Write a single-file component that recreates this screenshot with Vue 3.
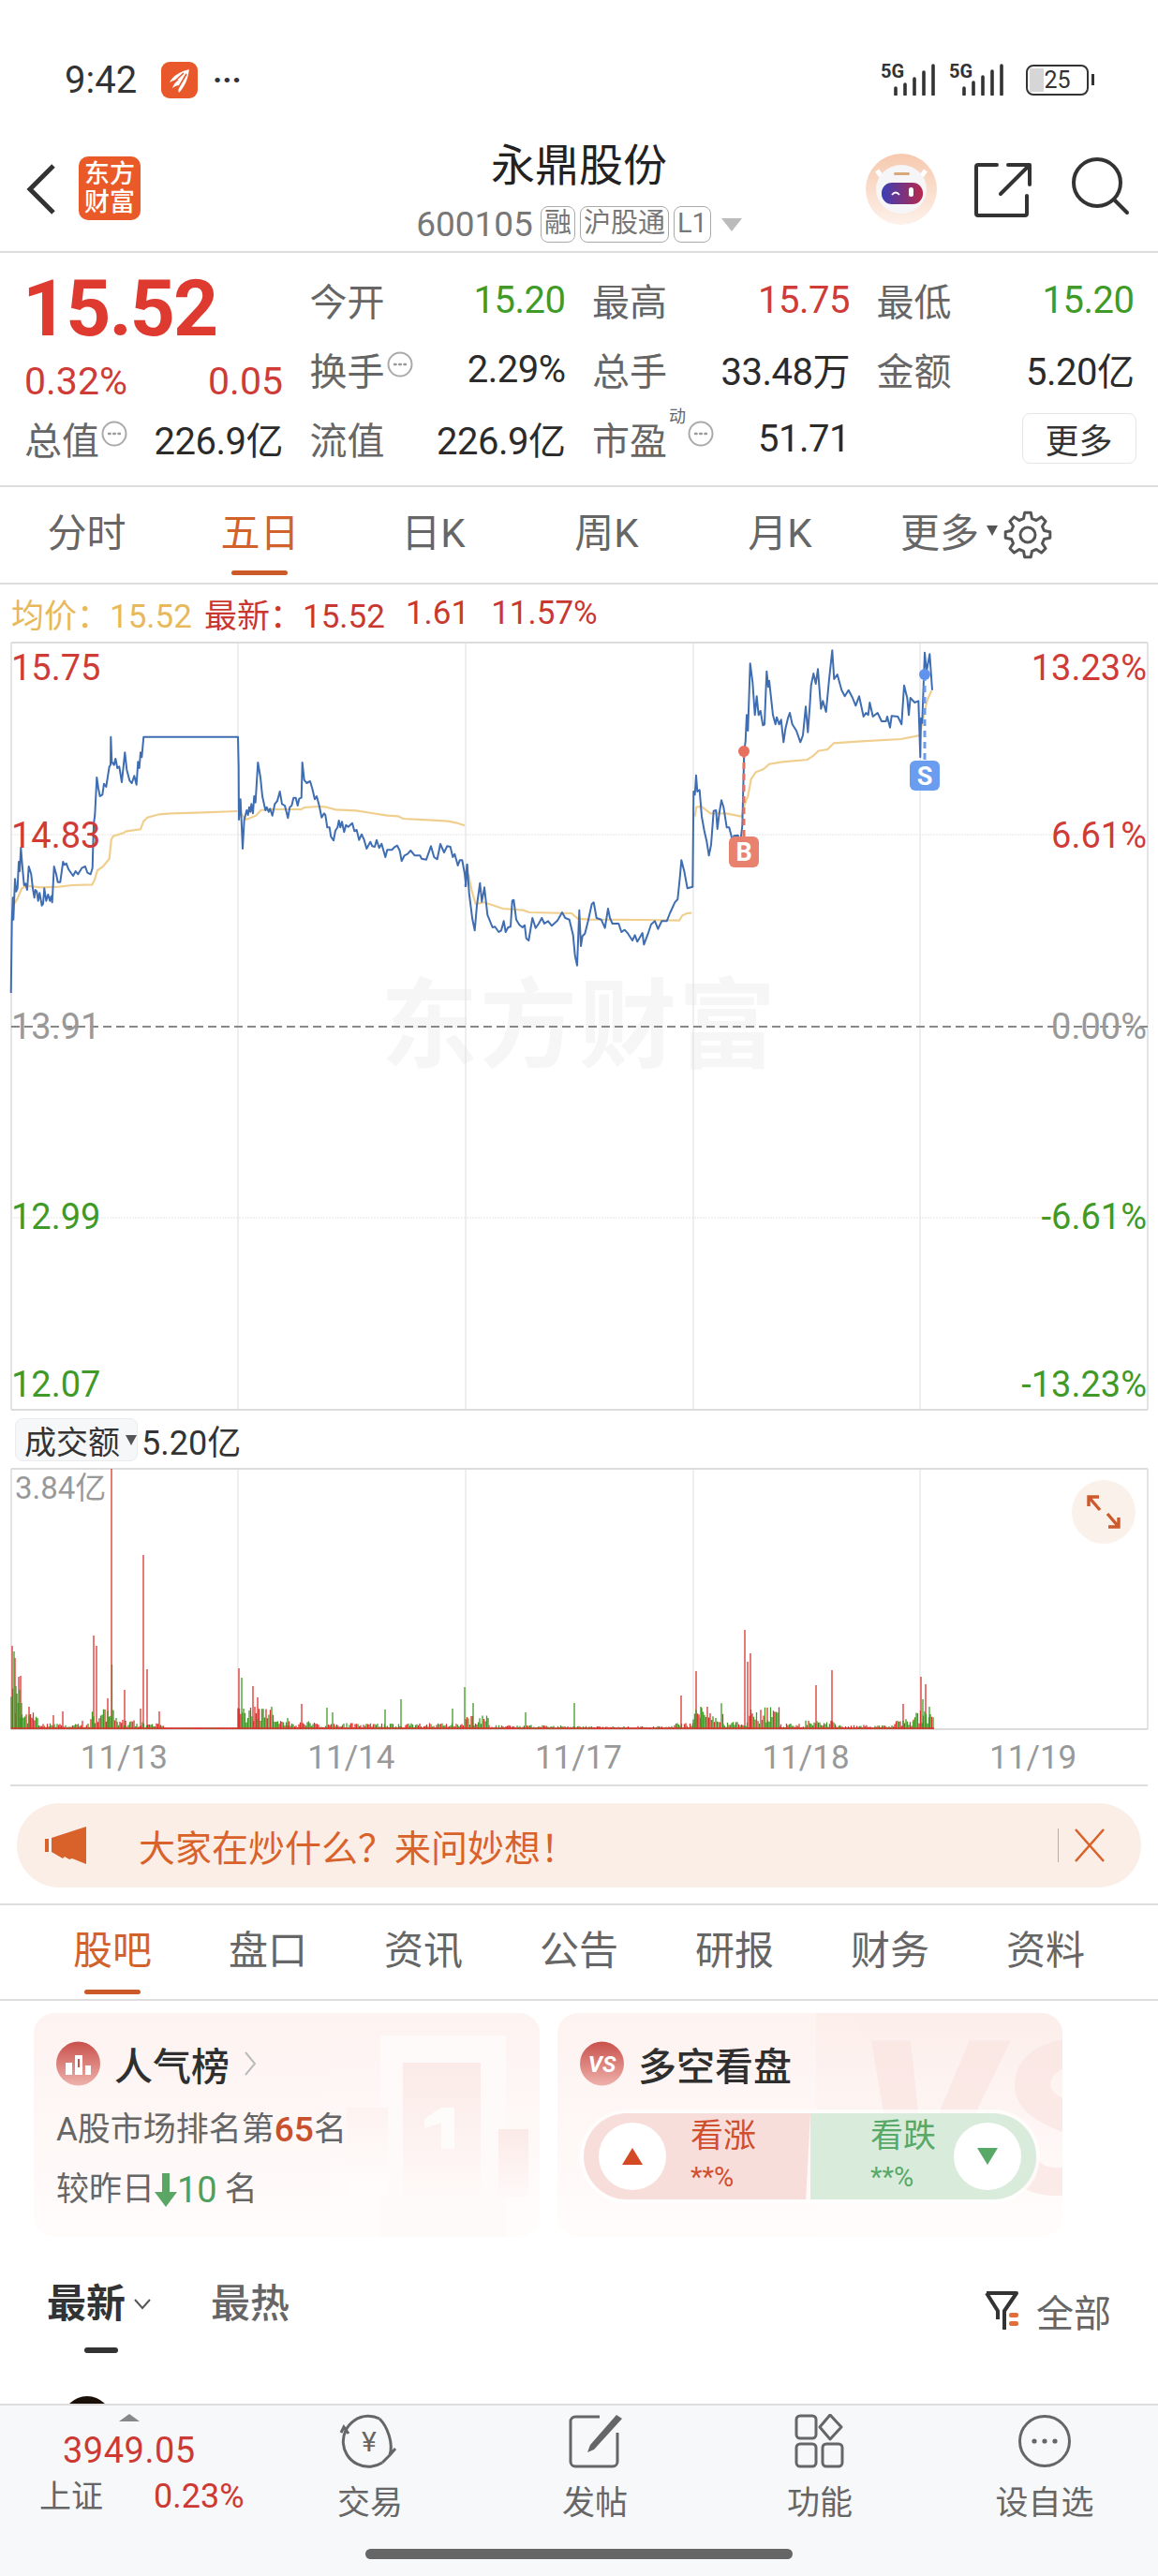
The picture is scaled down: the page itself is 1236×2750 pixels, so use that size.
<template>
  <div class="page">
    <!-- status bar -->
    <div class="status">
      <span class="time">9:42</span>
      <svg class="app-dot" width="39" height="39" viewBox="0 0 39 39">
        <rect width="39" height="39" rx="9" fill="#e9582a" />
        <path d="M30 8C21 10 12 15 9 22c3-2 7-3 10-3-3 2-6 5-7 9 3-2 5-3 7-3-1 3-1 5 0 8 5-5 10-14 11-26z" fill="#fff" />
        <path d="M27 13 17 30M24 12 12 23" stroke="#e9582a" stroke-width="1.6" fill="none" />
      </svg>
      <span class="more-dots">···</span>
      <div class="status-right">
        <div class="sig">
          <span class="five-g">5G</span>
          <svg width="65" height="34" viewBox="0 0 65 34"><path v-for="(b, i) in bars1" :key="i" :d="`M${b[0]} 33V${b[1]}`" stroke="#333" stroke-width="3.6" stroke-linecap="round" /></svg>
        </div>
        <div class="sig">
          <span class="five-g">5G</span>
          <svg width="65" height="34" viewBox="0 0 65 34"><path v-for="(b, i) in bars2" :key="i" :d="`M${b[0]} 33V${b[1]}`" stroke="#333" stroke-width="3.6" stroke-linecap="round" /></svg>
        </div>
        <div class="battery"><span class="batt-fill"></span><span class="batt-num">25</span></div>
        <span class="batt-nub"></span>
      </div>
    </div>

    <!-- stock header -->
    <div class="nav">
      <svg class="back" width="32" height="54" viewBox="0 0 32 54"><path d="M29 2 4 27l25 25" fill="none" stroke="#333" stroke-width="5" /></svg>
      <div class="logo"><span>东方</span><span>财富</span></div>
      <div class="nav-mid">
        <div class="stock-name">永鼎股份</div>
        <div class="stock-code">
          <span class="code-num">600105</span>
          <span class="tag">融</span>
          <span class="tag">沪股通</span>
          <span class="tag">L1</span>
          <span class="tri-down"></span>
        </div>
      </div>
      <svg class="bot" width="76" height="76" viewBox="0 0 76 76">
        <defs>
          <linearGradient id="botbg" x1="0" y1="0" x2="0" y2="1"><stop offset="0" stop-color="#f6c9ae" /><stop offset="1" stop-color="#fdf1ea" /></linearGradient>
          <linearGradient id="visor" x1="0" y1="0" x2="1" y2="0"><stop offset="0" stop-color="#3a3fb8" /><stop offset="1" stop-color="#b8284a" /></linearGradient>
        </defs>
        <circle cx="38" cy="38" r="38" fill="url(#botbg)" />
        <path d="M12 18l6 8M64 18l-6 8" stroke="#fff" stroke-width="5" />
        <ellipse cx="38" cy="38" rx="27" ry="26" fill="#f6f6f8" />
        <rect x="30" y="20" width="17" height="3" rx="1.5" fill="#d8a878" />
        <rect x="17" y="31" width="44" height="23" rx="11" fill="url(#visor)" />
        <path d="M28 44q4-5 8 0" stroke="#fff" stroke-width="1.8" fill="none" />
        <rect x="46" y="36" width="5" height="10" rx="2.5" fill="#fff" />
      </svg>
      <svg class="share" width="62" height="60" viewBox="0 0 62 60">
        <path d="M24 4H4a2 2 0 0 0-2 2v50a2 2 0 0 0 2 2h50a2 2 0 0 0 2-2V37M36 4h23v21M58 5 28 35" fill="none" stroke="#333" stroke-width="4" stroke-linecap="round" stroke-linejoin="round" />
      </svg>
      <svg class="search" width="62" height="62" viewBox="0 0 62 62">
        <circle cx="27" cy="27" r="25" fill="none" stroke="#333" stroke-width="4" />
        <path d="M45 45 59 59" stroke="#333" stroke-width="4" stroke-linecap="round" />
      </svg>
    </div>

    <!-- quote -->
    <div class="quote">
      <div class="price-block">
        <div class="price">15.52</div>
        <div class="change"><span>0.32%</span><span>0.05</span></div>
      </div>
      <div v-for="c in quoteCells" :key="c.label" class="cell">
        <span class="cell-label">{{ c.label }}<sup v-if="c.sup" class="sup">{{ c.sup }}</sup>
          <svg v-if="c.info" class="info" width="28" height="28" viewBox="0 0 28 28"><circle cx="14" cy="14" r="12.5" fill="none" stroke="#aaa" stroke-width="2" /><path d="M8 14h1.6M13.2 14h1.6M18.4 14h1.6" stroke="#999" stroke-width="2.4" stroke-linecap="round" /></svg>
        </span>
        <span class="cell-val" :class="c.color">{{ c.value }}</span>
      </div>
      <div class="cell cell-first">
        <span class="cell-label">总值<svg class="info" width="28" height="28" viewBox="0 0 28 28"><circle cx="14" cy="14" r="12.5" fill="none" stroke="#aaa" stroke-width="2" /><path d="M8 14h1.6M13.2 14h1.6M18.4 14h1.6" stroke="#999" stroke-width="2.4" stroke-linecap="round" /></svg></span>
        <span class="cell-val">226.9亿</span>
      </div>
      <div v-for="c in quoteCells2" :key="c.label" class="cell">
        <span class="cell-label">{{ c.label }}<sup v-if="c.sup" class="sup">{{ c.sup }}</sup>
          <svg v-if="c.info" class="info" width="28" height="28" viewBox="0 0 28 28"><circle cx="14" cy="14" r="12.5" fill="none" stroke="#aaa" stroke-width="2" /><path d="M8 14h1.6M13.2 14h1.6M18.4 14h1.6" stroke="#999" stroke-width="2.4" stroke-linecap="round" /></svg>
        </span>
        <span class="cell-val">{{ c.value }}</span>
      </div>
      <div class="cell cell-end"><button class="more-btn">更多</button></div>
    </div>

    <!-- period tabs -->
    <div class="period-tabs">
      <div v-for="t in periods" :key="t" class="period" :class="{ active: t === '五日' }">{{ t }}</div>
      <div class="period period-more">更多<span class="mini-tri"></span></div>
      <svg class="gear" width="52" height="52" viewBox="0 0 52 52">
        <path :d="gearPath" fill="none" stroke="#555" stroke-width="3" stroke-linejoin="round" />
        <circle cx="26" cy="26" r="8" fill="none" stroke="#555" stroke-width="3" />
      </svg>
    </div>

    <div class="legend">
      <span class="avg">均价：15.52</span>
      <span class="latest">最新：15.52</span>
      <span class="latest gap1">1.61</span>
      <span class="latest gap2">11.57%</span>
    </div>

    <!-- price chart -->
    <svg class="chart" width="1236" height="822" viewBox="0 685 1236 822">
      <text x="618" y="1132" class="watermark" text-anchor="middle">东方财富</text>
      <path d="M12 686H1225M12 1505H1225" stroke="#dcdcdc" stroke-width="2" />
      <path d="M12 686V1505M1225 686V1505" stroke="#dcdcdc" stroke-width="1.5" />
      <path d="M254 686V1505M497 686V1505M740 686V1505M982 686V1505" stroke="#dedede" stroke-width="1" />
      <path d="M12 891H1225M12 1300H1225" stroke="#e4e4e4" stroke-width="1" stroke-dasharray="2 1" />
      <path d="M12 1096H1225" stroke="#888" stroke-width="2" stroke-dasharray="9 5" />
      <polyline v-for="(a, i) in avgLines" :key="i" :points="a" fill="none" stroke="#f0cf8e" stroke-width="2.2" />
      <polyline :points="priceLine" fill="none" stroke="#3f6db2" stroke-width="2" stroke-linejoin="round" />
      <path d="M794 802V893" stroke="#e8705f" stroke-width="3" stroke-dasharray="7 5" />
      <circle cx="794" cy="802" r="6" fill="#e8705f" />
      <rect x="778" y="893" width="32" height="33" rx="6" fill="#e8826f" />
      <text x="794" y="919" class="badge" text-anchor="middle">B</text>
      <path d="M987 720V812" stroke="#6a9cf0" stroke-width="3" stroke-dasharray="7 5" />
      <circle cx="987" cy="720" r="6" fill="#5f93ee" />
      <rect x="971" y="812" width="32" height="32" rx="6" fill="#6a9cf0" />
      <text x="987" y="838" class="badge" text-anchor="middle">S</text>
      <text v-for="l in axisLeft" :key="l.t" x="12" :y="l.y" class="axis" :class="l.c">{{ l.t }}</text>
      <text v-for="l in axisRight" :key="l.t" x="1224" :y="l.y" class="axis" text-anchor="end" :class="l.c">{{ l.t }}</text>
    </svg>

    <!-- volume -->
    <div class="vol-head">
      <div class="vol-select">成交额<span class="mini-tri dark"></span></div>
      <span class="vol-val">5.20亿</span>
    </div>
    <div class="vol-wrap">
      <svg width="1236" height="280" viewBox="0 1567 1236 280">
        <path d="M12 1568H1225M12 1846H1225" stroke="#dcdcdc" stroke-width="2" />
        <path d="M12 1568V1846M1225 1568V1846" stroke="#dcdcdc" stroke-width="1.5" />
        <path d="M254 1568V1846M497 1568V1846M740 1568V1846M982 1568V1846" stroke="#dedede" stroke-width="1" />
        <path :d="volRed" stroke="#d8332e" stroke-width="1.3" fill="none" />
        <path :d="volGreen" stroke="#3f9a25" stroke-width="1.3" fill="none" />
        <path d="M12 1845H997" stroke="#d8332e" stroke-width="1.6" />
        <text x="16" y="1600" class="vol-max">3.84亿</text>
      </svg>
      <div class="expand">
        <svg width="36" height="36" viewBox="0 0 36 36">
          <path d="M2 12V2h11M2 2l12 14M34 24v10H23M34 34 22 20" fill="none" stroke="#cd5a2c" stroke-width="3.4" />
        </svg>
      </div>
    </div>
    <div class="dates"><span v-for="d in dates" :key="d">{{ d }}</span></div>

    <!-- ask banner -->
    <div class="banner">
      <svg class="horn" width="46" height="40" viewBox="0 0 46 40">
        <path d="M0 13h4v14H0zM7 12 44 0v40l-15-6-3 1-5-3-2 2-12-7z" fill="#d9622b" />
      </svg>
      <span class="banner-text">大家在炒什么？来问妙想！</span>
      <span class="banner-sep"></span>
      <svg width="34" height="38" viewBox="0 0 34 38"><path d="M2 2 32 36M32 2 2 36" stroke="#d9622b" stroke-width="2.6" /></svg>
    </div>

    <!-- community tabs -->
    <div class="bar-tabs">
      <div v-for="t in barTabs" :key="t" class="bar-tab" :class="{ active: t === '股吧' }">{{ t }}</div>
    </div>

    <!-- cards -->
    <div class="cards">
      <div class="card">
        <svg class="card-bg" width="540" height="239" viewBox="0 0 540 239">
          <defs>
            <linearGradient id="podA" x1="0" y1="0" x2="0" y2="1"><stop offset="0" stop-color="#fbeae7" /><stop offset="1" stop-color="#fef9f8" /></linearGradient>
            <linearGradient id="podB" x1="0" y1="0" x2="0" y2="1"><stop offset="0" stop-color="#fdf3f1" /><stop offset="1" stop-color="#fffdfc" /></linearGradient>
          </defs>
          <rect x="315" y="0" width="225" height="239" fill="url(#podB)" />
          <rect x="370" y="24" width="134" height="215" fill="#fefafa" />
          <rect x="334" y="101" width="44" height="95" fill="url(#podB)" />
          <rect x="394" y="53" width="83" height="143" fill="url(#podA)" />
          <rect x="496" y="124" width="32" height="72" fill="url(#podA)" />
          <path d="M417 113l18-12h14v44h-14v-28l-18 6z" fill="#fefcfb" />
        </svg>
        <div class="card-body">
          <div class="card-title">
            <svg width="47" height="48" viewBox="0 0 47 48">
              <defs><linearGradient id="ic1" x1="0" y1="0" x2="0" y2="1"><stop offset="0" stop-color="#c9504c" /><stop offset="1" stop-color="#eeb2ab" /></linearGradient></defs>
              <circle cx="23.5" cy="24" r="23.5" fill="url(#ic1)" />
              <path d="M10 23h7v13h-7zM20 15h8v21h-8zM31 26h6v10h-6z" fill="#fff" />
              <path d="M24 19v9" stroke="#c9504c" stroke-width="2" />
            </svg>
            <span>人气榜</span>
            <svg width="14" height="28" viewBox="0 0 14 28"><path d="M2 2 12 14 2 26" fill="none" stroke="#bbb" stroke-width="2" /></svg>
          </div>
          <div class="card-line">A股市场排名第<b class="rank">65</b>名</div>
          <div class="card-line second">较昨日<svg width="24" height="36" viewBox="0 0 24 36"><path d="M8 0h8v20h8L12 36 0 20h8z" fill="#5aa765" /></svg><span class="drop">10</span><span class="ming">名</span></div>
        </div>
      </div>
      <div class="card card-vs">
        <span class="ghost-band"></span>
        <span class="ghost-vs">VS</span>
        <div class="card-body">
          <div class="card-title">
            <svg width="47" height="48" viewBox="0 0 47 48">
              <circle cx="23.5" cy="24" r="23.5" fill="url(#ic1)" />
              <text x="23.5" y="33" class="vs-mark" text-anchor="middle">VS</text>
            </svg>
            <span>多空看盘</span>
          </div>
          <div class="pill">
            <div class="pill-side up">
              <span class="pill-circle"><span class="tri up-tri"></span></span>
              <div class="pill-text"><span>看涨</span><small>**%</small></div>
            </div>
            <div class="pill-side down">
              <div class="pill-text"><span>看跌</span><small>**%</small></div>
              <span class="pill-circle"><span class="tri down-tri"></span></span>
            </div>
          </div>
        </div>
      </div>
    </div>

    <!-- feed tabs -->
    <div class="feed-tabs">
      <div class="feed-tab on">最新<svg width="20" height="12" viewBox="0 0 20 12"><path d="M2 1l8 9 8-9" fill="none" stroke="#555" stroke-width="2" /></svg></div>
      <div class="feed-tab">最热</div>
      <div class="feed-filter">
        <svg width="38" height="44" viewBox="0 0 38 44">
          <path d="M3 3h32L22 22v20M3 3l12 19v9" fill="none" stroke="#333" stroke-width="4" stroke-linejoin="round" />
          <rect x="27" y="24" width="10" height="5" rx="2" fill="#e0703a" />
          <rect x="27" y="33" width="10" height="5" rx="2" fill="#e0703a" />
        </svg>
        <span>全部</span>
      </div>
    </div>
    <div class="post-peek"><span class="avatar"></span></div>

    <!-- bottom bar -->
    <div class="footer">
      <div class="index">
        <span class="index-tri"></span>
        <div class="index-num">3949.05</div>
        <div class="index-row"><span class="index-name">上证</span><span class="index-pct">0.23%</span></div>
      </div>
      <div class="foot-item">
        <svg width="66" height="58" viewBox="0 0 66 58">
          <path d="M43 5A27 27 0 1 0 46 52M2 20l3-6 5 7" fill="none" stroke="#666" stroke-width="3" />
          <path d="M43 5C52 14 58 32 54 44M54 44l6-7M46 52l8-8" fill="none" stroke="#666" stroke-width="3" />
          <text x="32" y="40" class="yen" text-anchor="middle">¥</text>
        </svg>
        <span>交易</span>
      </div>
      <div class="foot-item">
        <svg width="58" height="58" viewBox="0 0 58 58">
          <path d="M34 3H8a5 5 0 0 0-5 5v43a5 5 0 0 0 5 5h40a5 5 0 0 0 5-5V20" fill="none" stroke="#666" stroke-width="3" />
          <path d="M52 1 58 5 28 38l-7 3 3-8z" fill="#666" />
        </svg>
        <span>发帖</span>
      </div>
      <div class="foot-item">
        <svg width="54" height="58" viewBox="0 0 54 58">
          <rect x="2" y="2" width="21" height="24" rx="4" fill="none" stroke="#666" stroke-width="3" />
          <path d="M38 1 50 14 38 27 27 14z" fill="none" stroke="#666" stroke-width="3" stroke-linejoin="round" />
          <rect x="2" y="32" width="21" height="24" rx="4" fill="none" stroke="#666" stroke-width="3" />
          <rect x="30" y="32" width="21" height="24" rx="4" fill="none" stroke="#666" stroke-width="3" />
        </svg>
        <span>功能</span>
      </div>
      <div class="foot-item">
        <svg width="58" height="58" viewBox="0 0 58 58">
          <circle cx="29" cy="29" r="26.5" fill="none" stroke="#666" stroke-width="3" />
          <circle cx="18" cy="29" r="2.6" fill="#666" /><circle cx="29" cy="29" r="2.6" fill="#666" /><circle cx="40" cy="29" r="2.6" fill="#666" />
        </svg>
        <span>设自选</span>
      </div>
      <span class="home-bar"></span>
    </div>
  </div>
</template>

<script setup>
const bars1 = [[16, 26], [26, 22], [36, 16], [46, 9], [56, 2]]
const bars2 = [[16, 26], [26, 20], [36, 14], [46, 8], [56, 2]]

const quoteCells = [
  { label: '今开', value: '15.20', color: 'green' },
  { label: '最高', value: '15.75', color: 'red' },
  { label: '最低', value: '15.20', color: 'green' },
  { label: '换手', value: '2.29%', info: true },
  { label: '总手', value: '33.48万' },
  { label: '金额', value: '5.20亿' },
]
const quoteCells2 = [
  { label: '流值', value: '226.9亿' },
  { label: '市盈', sup: '动', value: '51.71', info: true },
]
const periods = ['分时', '五日', '日K', '周K', '月K']
const dates = ['11/13', '11/14', '11/17', '11/18', '11/19']
const barTabs = ['股吧', '盘口', '资讯', '公告', '研报', '财务', '资料']

const axisLeft = [
  { t: '15.75', y: 726, c: 'red' },
  { t: '14.83', y: 905, c: 'red' },
  { t: '13.91', y: 1109, c: 'grey' },
  { t: '12.99', y: 1312, c: 'green' },
  { t: '12.07', y: 1491, c: 'green' },
]
const axisRight = [
  { t: '13.23%', y: 726, c: 'red' },
  { t: '6.61%', y: 905, c: 'red' },
  { t: '0.00%', y: 1109, c: 'grey' },
  { t: '-6.61%', y: 1312, c: 'green' },
  { t: '-13.23%', y: 1491, c: 'green' },
]

// traced at 3x, so each list keeps the crop origin it was read from
const toPts = (ox, oy, pts) =>
  pts.map(([x, y]) => `${(ox + x / 3).toFixed(1)},${(oy + y / 3).toFixed(1)}`).join(' ')

const day1 = [[5,870],[8,640],[11,565],[13,635],[18,505],[22,545],[26,535],[30,450],[33,480],[37,405],[42,470],[47,525],[52,520],[57,540],[62,465],[70,490],[75,535],[80,565],[83,540],[88,545],[92,575],[97,550],[104,590],[108,585],[112,535],[118,575],[124,555],[130,575],[134,560],[137,580],[143,465],[150,490],[155,515],[163,515],[172,450],[176,460],[182,455],[190,475],[204,495],[212,480],[220,490],[232,470],[243,465],[250,485],[260,490],[266,470],[270,330],[274,300],[280,180],[285,215],[290,240],[298,235],[303,200],[310,210],[320,145],[324,140],[325,50],[328,130],[335,140],[340,120],[346,150],[352,145],[360,195],[370,100],[376,155],[385,190],[392,198],[400,175],[407,203],[412,130],[416,150],[420,100],[424,115],[430,50],[732,50]]
const day2 = [[14,55],[15,225],[20,160],[27,318],[32,225],[40,195],[44,210],[48,185],[52,200],[55,175],[60,205],[64,150],[68,170],[76,42],[84,90],[90,150],[100,195],[104,185],[110,200],[115,190],[122,212],[130,175],[138,165],[146,135],[153,175],[162,180],[172,220],[178,185],[184,180],[190,155],[197,155],[203,180],[208,158],[215,155],[218,42],[224,98],[232,108],[243,102],[250,125],[258,160],[264,150],[272,180],[280,218],[288,205],[292,210],[298,250],[305,250],[310,280],[318,292],[324,260],[331,250],[335,228],[340,250],[345,232],[352,265],[358,242],[365,248],[378,236],[385,262],[392,258],[400,290],[408,272],[416,290],[424,318],[436,296],[442,310],[450,312],[456,290],[464,316],[472,302],[484,345],[490,322],[505,322],[512,314],[522,308],[530,325],[536,358],[545,340],[555,335],[565,324],[578,340],[595,340],[600,350],[615,353],[630,310],[640,345],[650,352],[660,303],[672,330],[682,310],[692,312],[700,345],[706,335],[716,372],[722,355],[730,355],[738,398],[742,438],[745,370]]
const day3 = [[5,138],[11,68],[17,160],[24,215],[27,240],[35,280],[42,200],[52,128],[58,188],[66,142],[76,230],[84,250],[92,270],[100,268],[112,285],[120,280],[128,250],[134,285],[142,270],[150,268],[155,185],[160,182],[168,245],[178,262],[188,270],[195,263],[200,305],[208,312],[220,240],[230,272],[240,258],[250,240],[258,258],[270,250],[282,265],[300,248],[315,222],[325,240],[338,245],[350,295],[356,360],[363,392],[370,215],[375,330],[380,298],[388,290],[398,250],[410,195],[416,190],[425,240],[440,245],[452,272],[462,210],[468,240],[476,258],[490,258],[496,258],[505,285],[515,278],[526,290],[540,312],[548,295],[556,316],[572,288],[577,325],[590,290],[600,260],[612,250],[622,275],[634,250],[650,250],[660,225],[676,190],[685,180],[692,110],[697,55],[706,90],[716,145],[733,140]]
const day4 = [[16,480],[20,490],[24,428],[28,480],[35,475],[42,560],[50,605],[58,640],[65,685],[72,650],[80,542],[88,540],[92,600],[98,550],[105,508],[112,530],[122,595],[130,595],[140,635],[145,622],[158,620],[165,650],[172,590],[178,350],[182,320],[186,235],[190,285],[197,70],[205,130],[212,235],[218,175],[224,235],[230,222],[238,268],[243,265],[250,95],[255,145],[258,125],[270,235],[278,265],[282,242],[290,265],[296,250],[304,322],[310,280],[318,245],[324,228],[332,265],[345,285],[358,322],[366,300],[375,208],[382,290],[388,208],[392,140],[400,102],[407,135],[414,88],[424,215],[430,190],[440,225],[450,120],[460,28],[466,120],[476,105],[490,155],[500,175],[512,155],[525,180],[535,205],[546,175],[560,240],[568,228],[575,235],[580,195],[590,240],[605,228],[618,255],[632,255],[636,240],[645,275],[650,238],[670,240],[682,265],[690,140],[700,180],[705,235],[710,180],[724,195],[736,190],[742,370],[744,245],[748,260],[756,35],[762,95],[772,40],[780,155]]

const priceLine = [
  toPts(10, 770, day1),
  toPts(250, 800, day2),
  toPts(495, 900, day3),
  toPts(735, 685, day4),
].join(' ')

const avgLines = [
  toPts(10, 770, [[12,590],[25,570],[40,535],[55,527],[100,532],[160,530],[200,525],[265,523],[272,510],[282,478],[300,465],[320,440],[326,380],[332,368],[365,358],[375,352],[420,346],[430,320],[442,308],[480,298],[520,295],[600,293],[730,288]]),
  toPts(250, 800, [[15,198],[38,225],[70,212],[85,195],[110,192],[160,192],[215,192],[225,186],[270,183],[290,184],[325,193],[390,196],[440,204],[490,212],[525,214],[540,222],[620,226],[685,230],[710,235],[738,244]]),
  toPts(495, 900, [[15,100],[25,150],[38,195],[65,190],[90,198],[125,210],[190,215],[210,222],[345,225],[365,242],[400,245],[570,246],[690,248],[700,232],[715,225],[730,224]]),
  toPts(735, 685, [[20,560],[25,530],[40,527],[70,550],[120,550],[170,560],[180,520],[190,495],[200,440],[215,418],[240,408],[258,392],[300,385],[380,378],[400,365],[415,350],[445,345],[465,325],[540,320],[680,312],[740,300],[756,220],[765,185],[778,157]]),
]

// volume: a noisy floor per stretch of the axis, plus the spikes read off the crops
const volLevels = [[12,22,45],[22,40,18],[40,97,6],[97,125,20],[125,155,9],[155,175,6],[175,254,1],[254,295,22],[295,340,8],[340,497,6],[497,522,16],[522,600,4],[600,720,3],[720,740,6],[740,772,26],[772,800,7],[800,832,22],[832,860,6],[860,892,9],[892,955,4],[955,975,10],[975,997,20]]
const spikes = [[13,89,'r'],[15,83,'g'],[16,76,'r'],[17,46,'g'],[20,56,'r'],[22,57,'r'],[23,28,'g'],[31,24,'r'],[40,12,'g'],[57,15,'r'],[67,19,'r'],[88,9,'r'],[100,100,'r'],[103,89,'r'],[119,278,'r'],[119.5,69,'g'],[115,33,'r'],[133,42,'r'],[153,186,'r'],[157,64,'r'],[150,22,'r'],[170,19,'r'],[255,65,'r'],[258,55,'g'],[270,46,'r'],[275,34,'r'],[307,12,'g'],[322,26,'r'],[349,23,'g'],[355,18,'g'],[411,21,'g'],[428,32,'g'],[322,27,'r'],[349,22,'g'],[411,21,'g'],[428,32,'g'],[483,22,'g'],[496,45,'g'],[505,28,'g'],[561,18,'g'],[613,28,'g'],[727,36,'r'],[743,62,'r'],[748,24,'g'],[795,106,'r'],[798,72,'r'],[801,81,'r'],[819,23,'r'],[871,47,'r'],[888,63,'r'],[964,27,'r'],[983,56,'r'],[988,48,'r'],[985,32,'g'],[992,24,'g']]

let seed = 20251118
const rand = () => {
  seed = (seed * 1664525 + 1013904223) % 4294967296
  return seed / 4294967296
}
let volRed = ''
let volGreen = ''
const addBar = (x, h, green) => {
  const seg = `M${x.toFixed(1)} 1846V${(1846 - h).toFixed(1)}`
  if (green) volGreen += seg
  else volRed += seg
}
volLevels.forEach(([from, to, lvl]) => {
  for (let x = from; x < to; x += 1.5) {
    addBar(x, Math.max(1.5, lvl * (0.25 + rand() * 0.85)), rand() > 0.5)
  }
})
spikes.forEach(([x, h, c]) => addBar(x, h, c === 'g'))

// cog outline, 8 teeth round (26,26)
const gearPath = (() => {
  const pts = []
  const teeth = 8
  for (let i = 0; i < teeth; i++) {
    const a = (i / teeth) * Math.PI * 2
    const step = Math.PI / teeth
    const p = (r, t) => `${(26 + r * Math.sin(t)).toFixed(1)} ${(26 - r * Math.cos(t)).toFixed(1)}`
    pts.push(p(24, a - step * 0.35), p(24, a + step * 0.35), p(18, a + step * 0.65), p(18, a + step * 1.35))
  }
  return `M${pts.join('L')}Z`
})()
</script>

<style>
html,
body {
  margin: 0;
  background: #fff;
}
</style>

<style scoped>
.page {
  width: 1236px;
  height: 2750px;
  overflow: hidden;
  background: #fff;
  color: #2b2b2b;
  font-family: Roboto, "Noto Sans CJK SC", sans-serif;
}

/* status bar */
.status {
  height: 90px;
  padding: 40px 0 0 69px;
  display: flex;
  align-items: center;
}
.time {
  font-size: 40px;
  color: #333;
  width: 103px;
}
.more-dots {
  margin-left: 16px;
  font-size: 34px;
  font-weight: 700;
  color: #333;
  line-height: 1;
}
.status-right {
  margin-left: auto;
  margin-right: 68px;
  display: flex;
  align-items: center;
  gap: 8px;
}
.sig {
  position: relative;
  width: 65px;
  height: 34px;
}
.five-g {
  position: absolute;
  left: 0;
  top: -2px;
  font-size: 20px;
  line-height: 20px;
  font-weight: 700;
  color: #333;
}
.battery {
  position: relative;
  width: 67px;
  height: 33px;
  margin-left: 9px;
  box-sizing: border-box;
  border: 2.5px solid #333;
  border-radius: 8px;
  display: flex;
  align-items: center;
  justify-content: center;
}
.batt-fill {
  position: absolute;
  left: 2px;
  top: 2px;
  bottom: 2px;
  width: 15px;
  background: #d6d6d6;
}
.batt-num {
  position: relative;
  font-size: 25px;
  color: #333;
}
.batt-nub {
  width: 3px;
  height: 12px;
  margin-left: -5px;
  background: #333;
}

/* nav */
.nav {
  position: relative;
  height: 140px;
  box-sizing: border-box;
  border-bottom: 2px solid #ddd;
  display: flex;
  align-items: flex-start;
}
.back {
  margin: 45px 0 0 28px;
}
.logo {
  margin: 37px 0 0 24px;
  width: 66px;
  height: 68px;
  border-radius: 10px;
  background: #ea5a28;
  color: #fff;
  font-size: 27px;
  line-height: 30px;
  font-weight: 500;
  display: flex;
  flex-direction: column;
  align-items: center;
  justify-content: center;
}
.nav-mid {
  position: absolute;
  left: 0;
  right: 0;
  top: 16px;
  text-align: center;
}
.stock-name {
  font-size: 47px;
  line-height: 62px;
  color: #222;
}
.stock-code {
  margin-top: 11px;
  display: flex;
  justify-content: center;
  align-items: center;
  gap: 5px;
  height: 40px;
  padding-left: 0;
}
.code-num {
  font-size: 37px;
  color: #777;
  margin-right: 3px;
}
.tag {
  box-sizing: border-box;
  height: 39px;
  padding: 0 3px;
  border: 1.5px solid #aaa;
  border-radius: 8px;
  font-size: 29px;
  line-height: 35px;
  color: #777;
}
.tri-down {
  width: 0;
  height: 0;
  margin: 2px 0 0 6px;
  border-left: 11px solid transparent;
  border-right: 11px solid transparent;
  border-top: 14px solid #bbb;
}
.bot {
  margin: 34px 0 0 auto;
}
.share {
  margin: 42px 0 0 40px;
}
.search {
  margin: 38px 30px 0 42px;
}

/* quote */
.quote {
  height: 250px;
  box-sizing: border-box;
  border-bottom: 2px solid #ddd;
  padding: 13px 26px 0 24px;
  display: grid;
  grid-template-columns: 278px 273px 275px 275px;
  grid-template-rows: 74px 74px 74px;
  column-gap: 28.5px;
}
.price-block {
  grid-row: 1 / span 2;
}
.price {
  margin-top: 3px;
  font-size: 84px;
  line-height: 88px;
  font-weight: 700;
  color: #de3a30;
  letter-spacing: -2px;
}
.change {
  margin-top: 9px;
  display: flex;
  justify-content: space-between;
  font-size: 41px;
  line-height: 48px;
  color: #cf3b36;
  padding-left: 2px;
}
.cell {
  display: flex;
  align-items: center;
  justify-content: space-between;
}
.cell-end {
  justify-content: flex-end;
}
.cell-label {
  position: relative;
  font-size: 40px;
  color: #666;
  display: inline-flex;
  align-items: center;
}
.sup {
  font-size: 18px;
  line-height: 20px;
  color: #666;
  align-self: flex-start;
  margin: -4px 0 0 2px;
}
.info {
  margin: -10px 0 0 2px;
}
.cell-val {
  font-size: 40px;
  color: #2b2b2b;
  letter-spacing: -0.5px;
}
.cell-first .cell-label {
  margin-left: 2px;
}
.red {
  color: #cf3b36;
  fill: #cf3b36;
}
.green {
  color: #3f9a27;
  fill: #3f9a27;
}
.grey {
  fill: #999;
}
.more-btn {
  width: 122px;
  height: 54px;
  margin-right: -2px;
  padding: 0;
  box-sizing: border-box;
  background: #fff;
  border: 1.5px solid #e6e6e6;
  border-radius: 8px;
  font-family: inherit;
  font-size: 36px;
  color: #333;
}

/* period tabs */
.period-tabs {
  height: 104px;
  box-sizing: border-box;
  border-bottom: 2px solid #ddd;
  display: flex;
  align-items: center;
}
.period {
  position: relative;
  width: 185px;
  height: 100%;
  line-height: 100px;
  text-align: center;
  font-size: 42px;
  color: #666;
}
.period.active {
  color: #d2622c;
}
.period.active::after {
  content: "";
  position: absolute;
  left: 62px;
  right: 63px;
  bottom: 8px;
  height: 5px;
  border-radius: 3px;
  background: #cc5a28;
}
.period-more {
  margin-left: -3px;
  width: 182px;
}
.mini-tri {
  display: inline-block;
  margin: 0 0 12px 8px;
  width: 0;
  height: 0;
  border-left: 6px solid transparent;
  border-right: 6px solid transparent;
  border-top: 11px solid #555;
  vertical-align: middle;
}
.gear {
  margin-left: -33px;
}

.legend {
  height: 61px;
  padding-left: 12px;
  display: flex;
  align-items: center;
  font-size: 35px;
}
.avg {
  color: #e8b95a;
  width: 206px;
}
.latest {
  color: #c9382f;
}
.gap1 {
  margin-left: 22px;
}
.gap2 {
  margin-left: 23px;
}

/* chart */
.chart {
  display: block;
}
.watermark {
  font-size: 104px;
  font-weight: 700;
  letter-spacing: 2px;
  fill: #f6f6f6;
}
.axis {
  font-size: 38px;
}
.badge {
  font-size: 27px;
  font-weight: 700;
  fill: #fff;
  font-family: Roboto, sans-serif;
}
.vol-head {
  height: 60px;
  display: flex;
  align-items: center;
  padding-left: 16px;
}
.vol-select {
  box-sizing: border-box;
  width: 131px;
  height: 46px;
  display: flex;
  align-items: center;
  padding-left: 9px;
  font-size: 34px;
  color: #333;
  background: #f6f7f9;
  border: 1px solid #ececec;
  border-radius: 8px;
}
.vol-select .dark {
  margin: 0 0 0 6px;
}
.vol-val {
  margin-left: 4px;
  font-size: 36px;
  color: #333;
}
.vol-wrap {
  position: relative;
  height: 280px;
}
.vol-wrap svg {
  display: block;
}
.vol-max {
  font-size: 33px;
  fill: #999;
}
.expand {
  position: absolute;
  left: 1144px;
  top: 13px;
  width: 68px;
  height: 68px;
  border-radius: 50%;
  background: #faf1ea;
  display: flex;
  align-items: center;
  justify-content: center;
}
.dates {
  height: 58px;
  margin: 0 11px;
  padding: 0 0 0 0;
  border-bottom: 2px solid #ddd;
  display: grid;
  grid-template-columns: repeat(5, 242.6px);
  align-items: center;
  text-align: center;
  font-size: 35px;
  color: #999;
}

/* banner */
.banner {
  margin: 18px 18px 0;
  height: 90px;
  border-radius: 45px;
  background: #fbeee7;
  display: flex;
  align-items: center;
  padding: 0 38px 0 30px;
  box-sizing: border-box;
}
.banner-text {
  margin-left: 54px;
  font-size: 39px;
  color: #d9622b;
}
.banner-sep {
  margin: 0 16px 0 auto;
  width: 1px;
  height: 36px;
  background: #d9a285;
}

/* community tabs */
.bar-tabs {
  margin-top: 17px;
  height: 104px;
  box-sizing: border-box;
  border-top: 2px solid #ddd;
  border-bottom: 2px solid #ddd;
  padding-left: 37px;
  display: grid;
  grid-template-columns: repeat(7, 166px);
}
.bar-tab {
  position: relative;
  text-align: center;
  font-size: 42px;
  line-height: 98px;
  color: #666;
}
.bar-tab.active {
  color: #d2622c;
}
.bar-tab.active::after {
  content: "";
  position: absolute;
  left: 53px;
  right: 53px;
  bottom: 5px;
  height: 5px;
  border-radius: 3px;
  background: #cc5a28;
}

/* cards */
.cards {
  padding: 13px 0 0 36px;
  display: flex;
  gap: 19px;
}
.card {
  position: relative;
  width: 540px;
  height: 239px;
  border-radius: 22px;
  overflow: hidden;
  background: linear-gradient(180deg, #fdf3f1 0%, #fffcfb 100%);
}
.card-vs {
  width: 539px;
}
.card-bg {
  position: absolute;
  left: 0;
  top: 0;
}
.ghost-band {
  position: absolute;
  left: 276px;
  top: 0;
  right: 0;
  bottom: 0;
  background: linear-gradient(180deg, #fceeeb 0%, #fffcfb 90%);
}
.ghost-vs {
  position: absolute;
  left: 320px;
  top: -20px;
  font-size: 230px;
  line-height: 270px;
  font-weight: 900;
  font-style: italic;
  color: #f9e4e1;
  opacity: 0.7;
}
.card-body {
  position: relative;
  padding: 30px 0 0 24px;
}
.card-title {
  display: flex;
  align-items: center;
  gap: 15px;
  height: 48px;
  font-size: 41px;
  font-weight: 500;
  color: #2f2f2f;
}
.vs-mark {
  font-size: 24px;
  font-weight: 700;
  font-style: italic;
  fill: #fff;
}
.card-line {
  margin-top: 20px;
  height: 54px;
  line-height: 54px;
  font-size: 35px;
  color: #666;
  display: flex;
  align-items: center;
}
.card-line.second {
  margin-top: 10px;
}
.rank {
  font-weight: 500;
  color: #c8502c;
  font-size: 37px;
}
.drop {
  color: #4f9f5e;
  font-size: 38px;
}
.ming {
  margin-left: 8px;
}
.pill {
  margin: 29px 0 0 4px;
  width: 483px;
  height: 92px;
  border-radius: 46px;
  overflow: hidden;
  display: flex;
  box-shadow: 0 0 0 4px rgba(255, 255, 255, 0.7);
}
.pill-side {
  display: flex;
  align-items: center;
  height: 100%;
}
.pill-side.up {
  width: 242px;
  background: #f8dedb;
  padding-left: 16px;
  box-sizing: border-box;
  clip-path: polygon(0 0, 100% 0, 98% 100%, 0 100%);
}
.pill-side.down {
  width: 241px;
  background: #d9ecdc;
  justify-content: flex-end;
  padding-right: 16px;
  box-sizing: border-box;
}
.pill-circle {
  width: 72px;
  height: 72px;
  border-radius: 50%;
  background: #fff;
  display: flex;
  align-items: center;
  justify-content: center;
  flex-shrink: 0;
}
.tri {
  width: 0;
  height: 0;
  border-left: 11px solid transparent;
  border-right: 11px solid transparent;
}
.up-tri {
  border-bottom: 18px solid #d34a24;
}
.down-tri {
  border-top: 18px solid #58a868;
}
.pill-text {
  display: flex;
  flex-direction: column;
  font-size: 35px;
  line-height: 44px;
  color: #cf4f2f;
}
.up .pill-text {
  margin-left: 26px;
}
.down .pill-text {
  margin-right: 19px;
  color: #58a868;
}
.pill-text small {
  font-size: 29px;
  line-height: 42px;
}

/* feed tabs */
.feed-tabs {
  height: 132px;
  display: flex;
  align-items: flex-start;
  position: relative;
}
.feed-tab {
  margin: 46px 0 0 50px;
  font-size: 42px;
  line-height: 52px;
  font-weight: 500;
  color: #666;
  display: flex;
  align-items: center;
  position: relative;
}
.feed-tab + .feed-tab {
  margin-left: 63px;
}
.feed-tab.on {
  color: #333;
  font-weight: 700;
}
.feed-tab.on svg {
  margin-left: 8px;
}
.feed-tab.on::after {
  content: "";
  position: absolute;
  left: 40px;
  top: 72px;
  width: 36px;
  height: 6px;
  border-radius: 3px;
  background: #333;
}
.feed-filter {
  margin: 50px 50px 0 auto;
  display: flex;
  align-items: center;
  gap: 18px;
  font-size: 40px;
  color: #666;
}
.post-peek {
  height: 46px;
  overflow: hidden;
  padding-left: 67px;
}
.avatar {
  display: block;
  margin-top: 38px;
  width: 52px;
  height: 52px;
  border-radius: 50%;
  background: #1a1008;
}

/* bottom bar */
.footer {
  position: relative;
  height: 184px;
  box-sizing: border-box;
  background: #f7f8fa;
  border-top: 2px solid #ddd;
  display: grid;
  grid-template-columns: 275px repeat(4, 240px);
}
.index {
  position: relative;
  padding-left: 42px;
}
.index-tri {
  position: absolute;
  left: 127px;
  top: 9px;
  width: 0;
  height: 0;
  border-left: 11px solid transparent;
  border-right: 11px solid transparent;
  border-bottom: 8px solid #888;
}
.index-num {
  margin: 25px 0 0 25px;
  font-size: 38px;
  line-height: 46px;
  color: #cc3a33;
  letter-spacing: 0.5px;
}
.index-row {
  margin-top: 4px;
  display: flex;
  align-items: center;
  gap: 54px;
  line-height: 44px;
}
.index-name {
  font-size: 34px;
  color: #666;
}
.index-pct {
  font-size: 36px;
  color: #cc3a33;
}
.foot-item {
  padding-top: 9px;
  display: flex;
  flex-direction: column;
  align-items: center;
  font-size: 35px;
  color: #666;
}
.foot-item svg {
  height: 58px;
}
.foot-item span {
  margin-top: 14px;
  line-height: 48px;
}
.yen {
  font-size: 30px;
  fill: #666;
}
.home-bar {
  position: absolute;
  left: 390px;
  top: 153px;
  width: 456px;
  height: 11px;
  border-radius: 6px;
  background: #666;
}
</style>
